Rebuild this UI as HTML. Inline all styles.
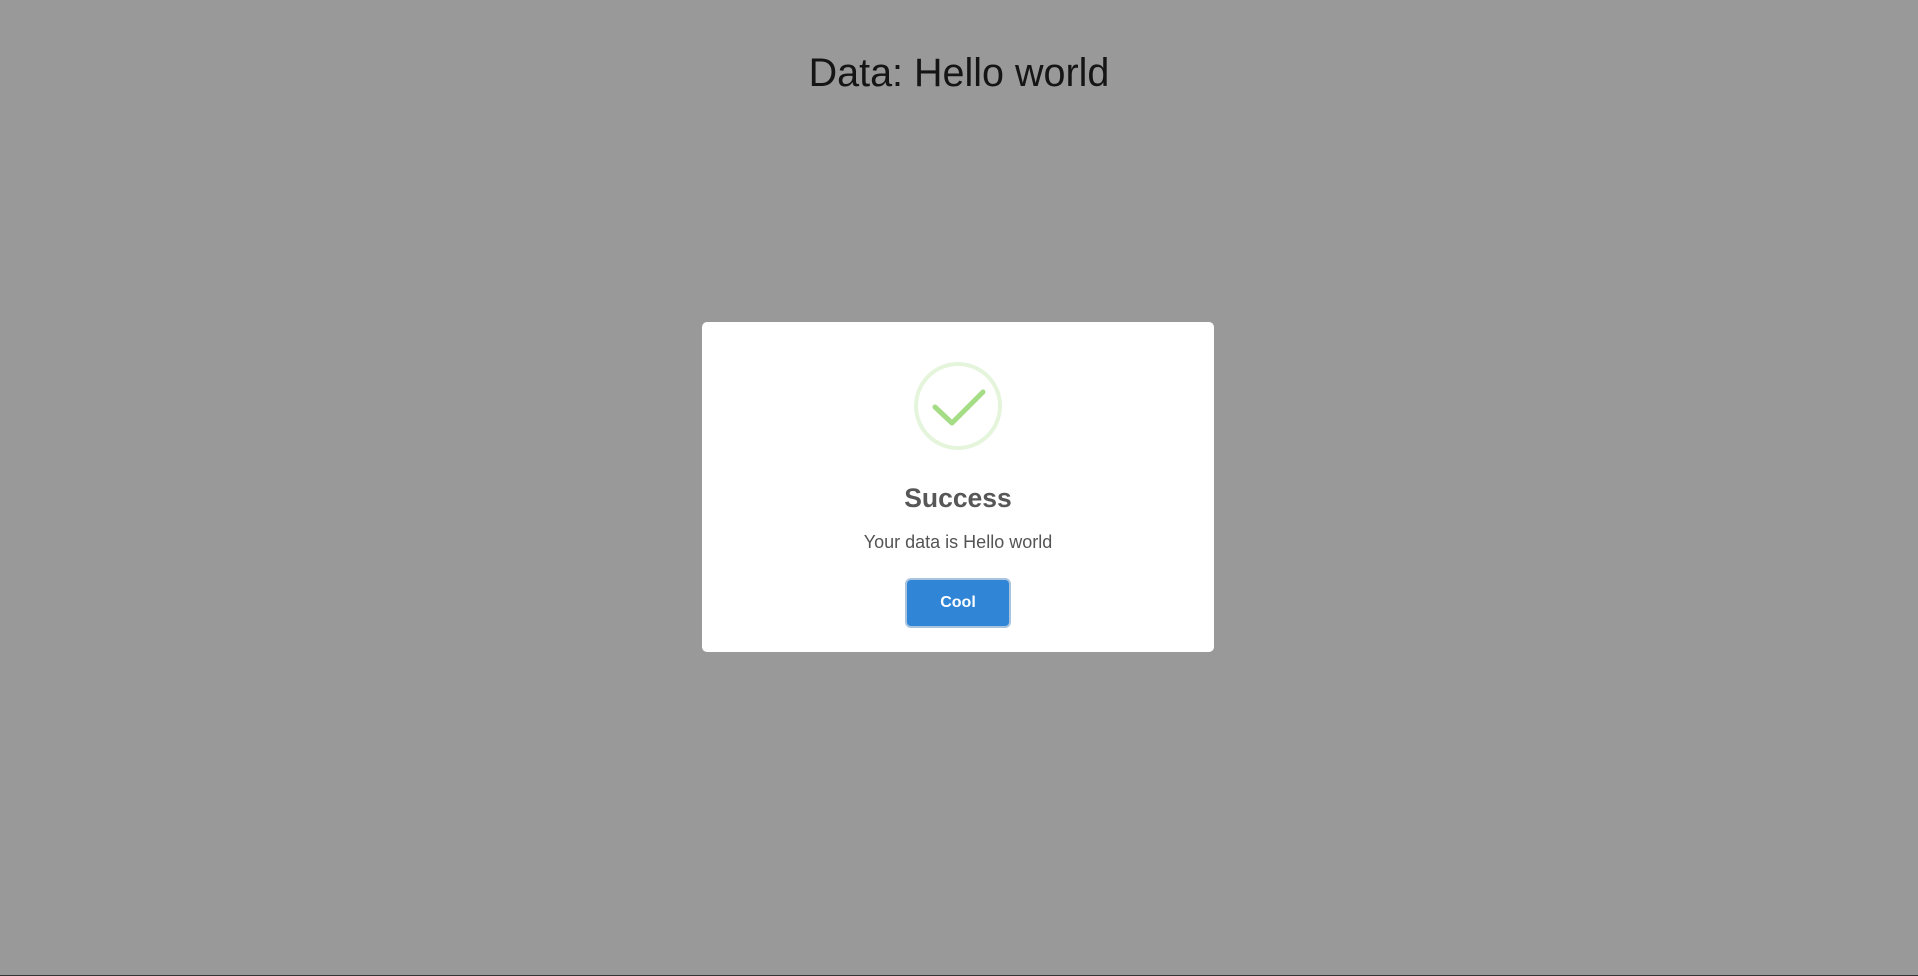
<!DOCTYPE html>
<html><head><meta charset="utf-8"><style>
html,body{margin:0;padding:0}
body{width:1918px;height:976px;background:#999;position:relative;overflow:hidden;font-family:"Liberation Sans","DejaVu Sans",sans-serif}
h1{position:absolute;left:0;width:1918px;top:49px;margin:0;text-align:center;font-size:39.5px;font-weight:normal;color:#151515;line-height:48px}
.modal{position:absolute;left:702px;top:322px;width:512px;height:330px;background:#fff;border-radius:5px}
svg{position:absolute;left:0;top:0}
.t{position:absolute;left:0;width:512px;top:156px;text-align:center;font-size:26.5px;font-weight:bold;color:#575757;line-height:40px}
.m{position:absolute;left:0;width:512px;top:208px;text-align:center;font-size:18px;color:#545454;line-height:24px}
.b{position:absolute;left:205px;top:258px;width:102px;height:46px;background:#3085d6;border-radius:4px;box-shadow:0 0 0 2px #a9c4de;color:#fff;font-size:16px;font-weight:bold;text-align:center;line-height:46px}
.bot{position:absolute;left:0;top:975px;width:1918px;height:1px;background:#333}
</style></head><body>
<h1>Data: Hello world</h1>
<div class="modal">
<svg width="512" height="330"><circle cx="256" cy="84" r="42" fill="none" stroke="#e4f5dc" stroke-width="4"/><path d="M233 85 L250 101 L281 70" fill="none" stroke="#a5dc86" stroke-width="5" stroke-linecap="round" stroke-linejoin="round"/></svg>
<div class="t">Success</div>
<div class="m">Your data is Hello world</div>
<div class="b">Cool</div>
</div>
<div class="bot"></div>
</body></html>
